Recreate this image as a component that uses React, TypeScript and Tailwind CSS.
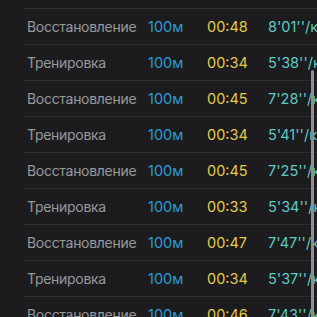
const laps = [
  { name: "Восстановление", dist: "100м", time: "00:48", pace: "8'01''/км" },
  { name: "Тренировка", dist: "100м", time: "00:34", pace: "5'38''/км" },
  { name: "Восстановление", dist: "100м", time: "00:45", pace: "7'28''/км" },
  { name: "Тренировка", dist: "100м", time: "00:34", pace: "5'41''/км" },
  { name: "Восстановление", dist: "100м", time: "00:45", pace: "7'25''/км" },
  { name: "Тренировка", dist: "100м", time: "00:33", pace: "5'34''/км" },
  { name: "Восстановление", dist: "100м", time: "00:47", pace: "7'47''/км" },
  { name: "Тренировка", dist: "100м", time: "00:34", pace: "5'37''/км" },
  { name: "Восстановление", dist: "100м", time: "00:46", pace: "7'43''/км" },
];

export default function App() {
  return (
    <div
      className="relative h-[317px] w-[317px] overflow-hidden bg-[#1c1c1e] pt-2"
      style={{ fontFamily: "Inter, 'Noto Sans', sans-serif" }}
    >
      {/* Split rows */}
      <div className="ml-6 flex flex-col">
        {laps.map((lap, i) => (
          <div
            key={i}
            className="grid h-9 shrink-0 grid-cols-[121px_59px_61px_1fr] items-center whitespace-nowrap border-t border-[#2e2e30] pl-[3px] text-[14.5px]"
          >
            <span className="text-[14px] tracking-[-0.3px] text-[#98989c]">{lap.name}</span>
            <span className="text-[#2c9ad8]">{lap.dist}</span>
            <span className="text-[#e3cb4c]">{lap.time}</span>
            <span className="text-[#5fcac3]">{lap.pace}</span>
          </div>
        ))}
      </div>

      {/* Scroll indicator */}
      <div className="absolute right-[3px] top-[70px] h-[260px] w-[3px] rounded-full bg-[#8e8e93]" />
    </div>
  );
}
